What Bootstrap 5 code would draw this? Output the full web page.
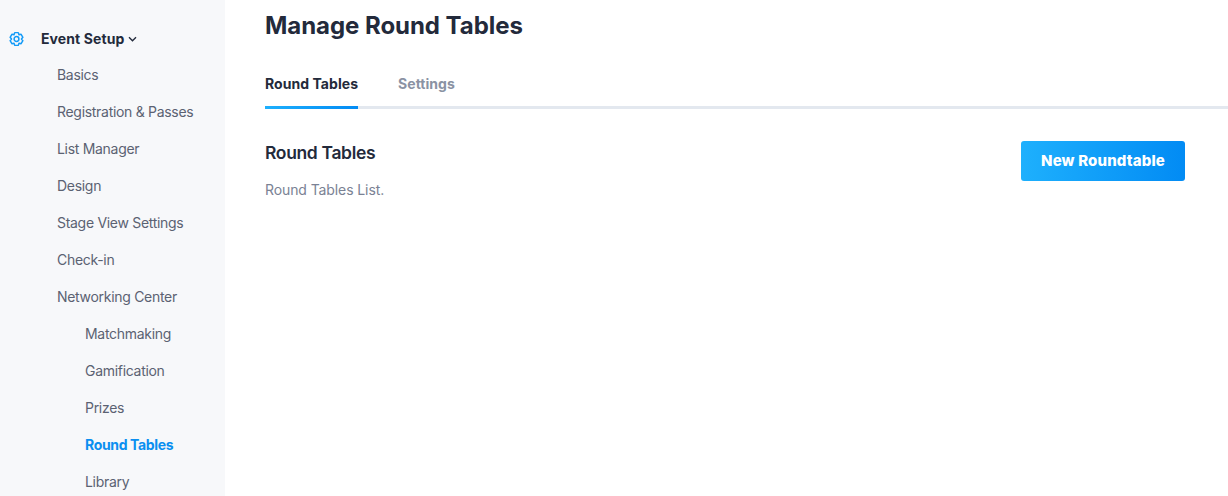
<!DOCTYPE html>
<html lang="en"><head><meta charset="utf-8"><title>Manage Round Tables</title>
<link href="https://cdn.jsdelivr.net/npm/bootstrap@5.3.0/dist/css/bootstrap.min.css" rel="stylesheet">
<style>
html,body{height:496px;overflow:hidden}
body{font-family:Inter,"Noto Sans",sans-serif;background:#fff;color:#1f2937}
.shell{height:496px;overflow:hidden}
.sidebar{width:225px;flex:none;background:#f7f8fa;padding-top:25px}
.side-head{height:27px;margin-bottom:4px;padding-left:8px;font-size:14px;font-weight:700;color:#232a3b;letter-spacing:.1px}
.side-head svg.gear{width:17px;height:18px;margin-right:16px}
.side-head svg.chev{width:9px;height:6px;margin-left:4px}
.side-list{margin:0;padding:0;list-style:none}
.side-list a{display:block;height:37px;line-height:37px;padding-left:57px;font-size:14px;color:#5b6272;text-decoration:none;letter-spacing:-.3px;white-space:nowrap}
.side-list a.sub{padding-left:85px}
.side-list a.on{color:#0b8ff0;font-weight:700;letter-spacing:-.35px}
.main-col{padding:0 0 0 40px;min-width:0}
.page-title{font-size:24px;font-weight:700;color:#232a3b;margin:0;line-height:29px;padding-top:11px;letter-spacing:-.05px}
.tabs{margin-top:24px;border-bottom:3px solid #e3e8ef;height:45px;gap:40px}
.tabs a{font-size:14px;font-weight:700;text-decoration:none;color:#8a92a3;height:45px;line-height:40px;letter-spacing:.05px}
.tabs a.on{color:#232a3b;border-bottom:3px solid;border-image:linear-gradient(90deg,#1eb0fd,#028bf4) 1}
.section{padding:32px 43px 0 0}
.section h2{font-size:17.5px;font-weight:600;color:#232a3b;margin:0;line-height:24px;letter-spacing:-.35px}
.section p{font-size:14px;color:#7a8294;margin:15px 0 0;line-height:20px;letter-spacing:-.1px}
.new-btn{width:164px;height:40px;border:0;border-radius:3px;background:linear-gradient(90deg,#1eb0fd,#028bf4);color:#fff;font-size:15px;font-weight:800;padding:0;letter-spacing:.15px}
.new-btn:hover{color:#fff}
</style></head>
<body>
<div class="shell d-flex">
<nav class="sidebar">
<div class="side-head d-flex align-items-center">
<svg class="gear" viewBox="0 0 24 24" fill="none" stroke="#149bf7" stroke-width="2.100" stroke-linejoin="round"><path d="M9.500 2h5l1 3 3-.7 2.500 4.300-2 2.400 2 2.400-2.500 4.300-3-.7-1 3h-5l-1-3-3 .7L3 13.400l2-2.400-2-2.400 2.500-4.300 3 .7z" transform="translate(0 1)"/><circle cx="12" cy="12" r="3.400"/></svg>
<span>Event Setup</span>
<svg class="chev" viewBox="0 0 9 6" fill="none" stroke="#232a3b" stroke-width="1.400"><path d="M1 1.200l3.500 3.500L8 1.200"/></svg>
</div>
<ul class="side-list">
<li><a href="#">Basics</a></li>
<li><a href="#">Registration &amp; Passes</a></li>
<li><a href="#">List Manager</a></li>
<li><a href="#">Design</a></li>
<li><a href="#">Stage View Settings</a></li>
<li><a href="#">Check-in</a></li>
<li><a href="#">Networking Center</a></li>
<li><a class="sub" href="#">Matchmaking</a></li>
<li><a class="sub" href="#">Gamification</a></li>
<li><a class="sub" href="#">Prizes</a></li>
<li><a class="sub on" href="#">Round Tables</a></li>
<li><a class="sub" href="#">Library</a></li>
</ul>
</nav>
<main class="main-col flex-grow-1">
<h1 class="page-title">Manage Round Tables</h1>
<div class="tabs d-flex"><a class="on" href="#">Round Tables</a><a href="#">Settings</a></div>
<div class="section d-flex justify-content-between align-items-start">
<div><h2>Round Tables</h2><p>Round Tables List.</p></div>
<button class="btn new-btn" type="button">New Roundtable</button>
</div>
</main>
</div>
<script src="https://cdn.jsdelivr.net/npm/bootstrap@5.3.0/dist/js/bootstrap.bundle.min.js"></script>
</body></html>
